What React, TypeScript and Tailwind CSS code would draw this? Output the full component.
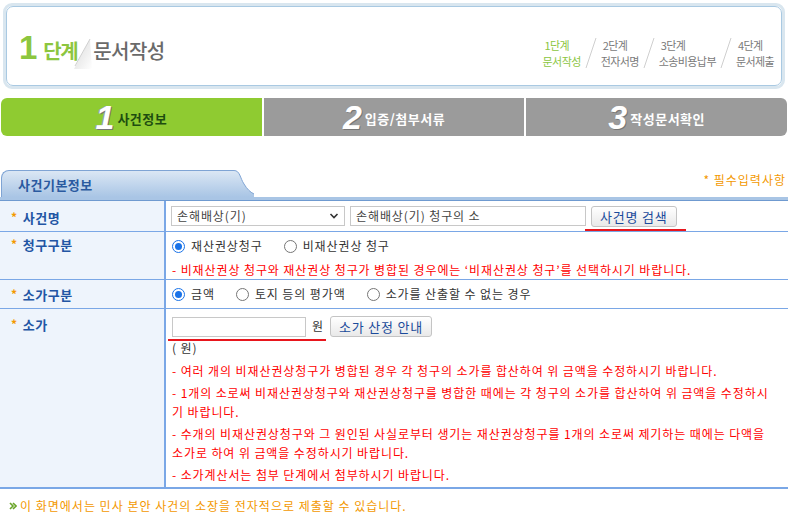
import React from "react";

const FONT = "font-['Noto_Sans_CJK_KR',sans-serif]";

const Radio = ({ checked, label }: { checked?: boolean; label: string }) => (
    <label className="flex items-center gap-[6px]">
        <span
            className={
                "w-[13px] h-[13px] rounded-full border flex items-center justify-center bg-white " +
                (checked ? "border-[#1a73e8]" : "border-[#767676]")
            }
        >
            {checked && <span className="w-[7px] h-[7px] rounded-full bg-[#1a73e8]" />}
        </span>
        <span className="text-[#333]">{label}</span>
    </label>
);

const Btn = ({ children }: { children: React.ReactNode }) => (
    <button className="h-[21px] px-[8px] rounded-[3px] border border-[#c4c4c4] bg-gradient-to-b from-white to-[#e9e9e9] text-[#1b4b9b] text-[13px] leading-none tracking-[0.8px]">
        {children}
    </button>
);

const Label = ({ text }: { text: string }) => (
    <div className="flex items-start gap-[5px] pl-[11px] text-[13px] font-bold text-[#2255a4] tracking-[0.6px]">
        <span className="text-[#f39800] text-[12px] leading-[14px]">*</span>
        <span className="leading-[15px]">{text}</span>
    </div>
);

const steps = [
    { n: "1단계", t: "문서작성", on: true },
    { n: "2단계", t: "전자서명" },
    { n: "3단계", t: "소송비용납부" },
    { n: "4단계", t: "문서제출" },
];

const tabs = [
    { n: "1", t: "사건정보", on: true },
    { n: "2", t: "입증/첨부서류" },
    { n: "3", t: "작성문서확인" },
];

const notes = [
    "- 여러 개의 비재산권상청구가 병합된 경우 각 청구의 소가를 합산하여 위 금액을 수정하시기 바랍니다.",
    "- 1개의 소로써 비재산권상청구와 재산권상청구를 병합한 때에는 각 청구의 소가를 합산하여 위 금액을 수정하시기 바랍니다.",
    "- 수개의 비재산권상청구와 그 원인된 사실로부터 생기는 재산권상청구를 1개의 소로써 제기하는 때에는 다액을 소가로 하여 위 금액을 수정하시기 바랍니다.",
    "- 소가계산서는 첨부 단계에서 첨부하시기 바랍니다.",
];

export default function App() {
    return (
        <div className={"w-[788px] h-[521px] bg-white overflow-hidden text-[12px] " + FONT}>
            {/* header */}
            <div className="pt-[3px] px-[3px]">
                <div className="h-[86px] rounded-[9px] border-[3px] border-[#d9e6ef] ">
                    <div className="h-full rounded-[7px] border border-[#a9c9e2] flex items-center justify-between pl-[12px] pr-[7px]">
                        <div className="flex items-end mt-[4px]">
                            <span className="text-[33px] leading-[30px] font-bold text-[#8cc63f] font-['Liberation_Sans',sans-serif]">1</span>
                            <span className="ml-[6px] text-[20px] leading-[24px] font-bold text-[#8cc63f] tracking-[-1.5px]">단계</span>
                            <svg width="20" height="34" viewBox="0 0 20 34" className="-ml-[5px] -mb-[6px]">
                                <defs>
                                    <linearGradient id="fold" x1="0" y1="0" x2="1" y2="1">
                                        <stop offset="0" stopColor="#d8d8d8" />
                                        <stop offset="1" stopColor="#ffffff" />
                                    </linearGradient>
                                </defs>
                                <polygon points="18,4 2,34 20,34" fill="url(#fold)" />
                                <line x1="18" y1="4" x2="3" y2="31" stroke="#d0d0d0" strokeWidth="1" />
                            </svg>
                            <span className="ml-[1px] text-[20px] leading-[24px] font-medium text-[#6a6a6a] tracking-[-0.5px]">문서작성</span>
                        </div>
                        <div className="flex items-center mt-[14px]">
                            {steps.map((s, i) => (
                                <React.Fragment key={s.n}>
                                    {i > 0 && (
                                        <svg width="16" height="32" viewBox="0 0 16 32" className="mx-[2px]">
                                            <line x1="13" y1="1" x2="3" y2="31" stroke="#cfcfcf" strokeWidth="1" />
                                        </svg>
                                    )}
                                    <div className={"flex flex-col items-start leading-[16px] text-[11px] tracking-[-0.6px] " + (s.on ? "text-[#8cc63f]" : "text-[#7a7a7a]")}>
                                        <span className="pl-[2px]">{s.n}</span>
                                        <span>{s.t}</span>
                                    </div>
                                </React.Fragment>
                            ))}
                        </div>
                    </div>
                </div>
            </div>

            {/* step tabs */}
            <div className="mt-[9px] px-[1px] flex gap-[2px] h-[38px]">
                {tabs.map((t, i) => (
                    <div
                        key={t.n}
                        className={
                            "flex-1 flex items-center justify-center gap-[3px] " +
                            (t.on ? "bg-[#8fcb31] " : "bg-[#9b9b9b] ") +
                            (i === 0 ? "rounded-l-[6px]" : i === 2 ? "rounded-r-[6px]" : "")
                        }
                    >
                        <span className="text-[34px] leading-none italic font-bold text-white font-['Liberation_Sans',sans-serif] [text-shadow:1px_1px_0_#777,-1px_0_0_#999]">
                            {t.n}
                        </span>
                        <span className={"text-[13px] font-bold mt-[3px] tracking-[0.5px] " + (t.on ? "text-[#1e4d10]" : "text-white")}>{t.t}</span>
                    </div>
                ))}
            </div>

            {/* section tab */}
            <div className="mt-[32px] relative">
                <div className="flex items-end h-[29px]">
                    <div className="ml-[1px] w-[230px] h-[27px] rounded-tl-[8px] border-t border-l border-[#7fa4d4] bg-gradient-to-b from-[#dbe7f4] to-[#a9c5e5] flex items-center pl-[16px]">
                        <span className="text-[13px] font-bold text-[#2a5aa0] mt-[2px] tracking-[0.5px]">사건기본정보</span>
                    </div>
                    <svg width="24" height="27" viewBox="0 0 24 27" className="-ml-[1px]">
                        <defs>
                            <linearGradient id="tabg" x1="0" y1="0" x2="0" y2="1">
                                <stop offset="0" stopColor="#dbe7f4" />
                                <stop offset="1" stopColor="#a9c5e5" />
                            </linearGradient>
                        </defs>
                        <path d="M0 0.5 H4 C10 0.5 10 8 14 14 C17 19 20 22 24 24 V27 H0 Z" fill="url(#tabg)" />
                        <path d="M0 0.5 H4 C10 0.5 10 8 14 14 C17 19 20 22 24 24" fill="none" stroke="#7fa4d4" strokeWidth="1" />
                    </svg>
                    <div className="flex-1 relative h-[27px]">
                        <span className="absolute right-[2px] top-[1px] text-[12px] text-[#f39800] tracking-[1px]">* 필수입력사항</span>
                    </div>
                </div>
                <div className="h-[4px] bg-[#a9c5e5] border-b border-[#6f9ad0]" />
            </div>

            {/* table */}
            <div className="grid grid-cols-[166px_1fr] border-b-2 border-[#7aa7e6] tracking-[0.9px]">
                <div className="bg-[#eef4fc] border-r-2 border-[#7aa7e6] border-b border-b-[#7aa7e6] pt-[9px] h-[31px]">
                    <Label text="사건명" />
                </div>
                <div className="border-b border-[#7aa7e6] h-[31px] flex items-center pl-[5px] gap-[5px]">
                    <div className="w-[174px] h-[20px] border border-[#c8c8c8] flex items-center justify-between px-[5px] text-[#444]">
                        <span>손해배상(기)</span>
                        <svg width="10" height="10" viewBox="0 0 10 10">
                            <path d="M1.5 3 L5 6.5 L8.5 3" fill="none" stroke="#333" strokeWidth="1.6" />
                        </svg>
                    </div>
                    <div className="w-[236px] h-[20px] border border-[#c8c8c8] flex items-center px-[5px] text-[#444]">손해배상(기) 청구의 소</div>
                    <div className="relative">
                        <Btn>사건명 검색</Btn>
                        <span className="absolute left-[-6px] right-[-9px] bottom-[-4px] h-[2px] bg-[#e8161d]" />
                    </div>
                </div>

                <div className="bg-[#eef4fc] border-r-2 border-[#7aa7e6] border-b border-b-[#7aa7e6] pt-[5px] h-[48px]">
                    <Label text="청구구분" />
                </div>
                <div className="border-b border-[#7aa7e6] h-[48px] pl-[6px] pt-[5px]">
                    <div className="flex gap-[21px]">
                        <Radio checked label="재산권상청구" />
                        <Radio label="비재산권상 청구" />
                    </div>
                    <p className="mt-[6px] text-[#ff0000]">- 비재산권상 청구와 재산권상 청구가 병합된 경우에는 ‘비재산권상 청구’를 선택하시기 바랍니다.</p>
                </div>

                <div className="bg-[#eef4fc] border-r-2 border-[#7aa7e6] border-b border-b-[#7aa7e6] pt-[7px] h-[29px]">
                    <Label text="소가구분" />
                </div>
                <div className="border-b border-[#7aa7e6] h-[29px] pl-[6px] flex items-center gap-[21px]">
                    <Radio checked label="금액" />
                    <Radio label="토지 등의 평가액" />
                    <Radio label="소가를 산출할 수 없는 경우" />
                </div>

                <div className="bg-[#eef4fc] border-r-2 border-[#7aa7e6] pt-[8px]">
                    <Label text="소가" />
                </div>
                <div className="pl-[6px] pr-[8px] pt-[6px] pb-[3px]">
                    <div className="flex items-center gap-[6px] relative w-fit">
                        <div className="w-[134px] h-[20px] border border-[#c8c8c8] mt-[2px]" />
                        <span className="text-[#333]">원</span>
                        <Btn>소가 산정 안내</Btn>
                        <span className="absolute left-[-4px] w-[158px] bottom-[-4px] h-[2px] bg-[#e8161d]" />
                    </div>
                    <p className="mt-[2px] text-[#333]">( 원)</p>
                    <div className="mt-[4px] text-[#ff0000] leading-[19px] flex flex-col gap-[3px]">
                        {notes.map((n) => (
                            <p key={n}>{n}</p>
                        ))}
                    </div>
                </div>
            </div>

            {/* footer */}
            <div className="mt-[8px] pl-[9px] flex items-center gap-[3px] text-[#f39800] tracking-[1px]">
                <svg width="8" height="8" viewBox="0 0 8 8">
                    <path d="M1 1 L4 4 L1 7 M4 1 L7 4 L4 7" fill="none" stroke="#6aa52a" strokeWidth="1.6" />
                </svg>
                <span>이 화면에서는 민사 본안 사건의 소장을 전자적으로 제출할 수 있습니다.</span>
            </div>
        </div>
    );
}
